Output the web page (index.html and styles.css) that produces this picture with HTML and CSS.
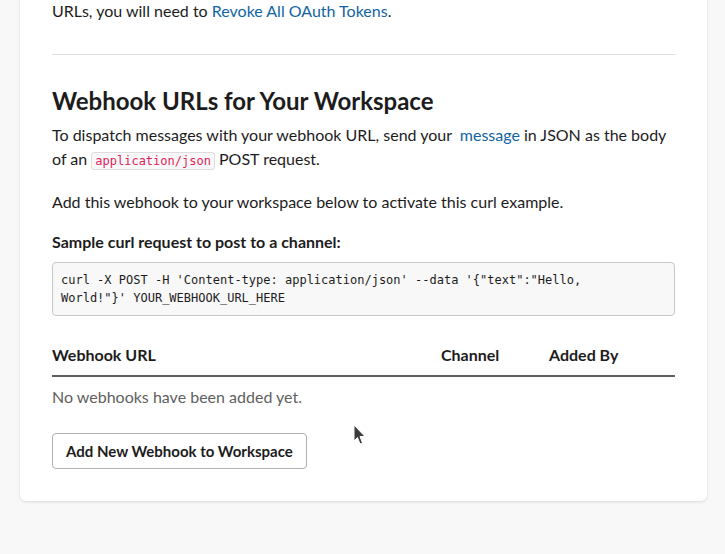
FILE: index.html
```html
<!DOCTYPE html>
<html>
<head>
<meta charset="utf-8">
<link rel="stylesheet" href="styles.css">
</head>
<body>
<div class="page">
  <section class="card">
    <p class="text">URLs, you will need to <a class="link" href="#">Revoke All OAuth Tokens</a>.</p>
    <hr class="divider">
    <h2 class="title">Webhook URLs for Your Workspace</h2>
    <p class="text">To dispatch messages with your webhook URL, send your <a class="link msg" href="#">message</a> in JSON as the body of an <code class="inline">application/json</code> POST request.</p>
    <p class="text gap-a">Add this webhook to your workspace below to activate this curl example.</p>
    <p class="text strong gap-b">Sample curl request to post to a channel:</p>
    <pre class="code">curl -X POST -H 'Content-type: application/json' --data '{"text":"Hello,
World!"}' YOUR_WEBHOOK_URL_HERE</pre>
    <div class="table-head">
      <span>Webhook URL</span>
      <span>Channel</span>
      <span>Added By</span>
    </div>
    <p class="text empty">No webhooks have been added yet.</p>
    <button class="btn">Add New Webhook to Workspace</button>
  </section>
</div>
<svg class="cursor" width="14" height="22" viewBox="0 0 14 22"><path d="M1 1 L1 17 L4.5 13.5 L7 20 L9.5 19 L7 12.5 L12 12.5 Z" fill="#3b3b3b" stroke="#fff" stroke-width="1"/></svg>
</body>
</html>
```

FILE: styles.css
```css
html, body {
  margin: 0;
  padding: 0;
  background: #f8f8f8;
  overflow: hidden;
}
body {
  font-family: Lato, "Noto Sans", sans-serif;
  color: #1d1c1d;
  font-size: 16px;
  line-height: 24px;
  position: relative;
  height: 554px;
}
.page {
  padding: 0 18px 0 20px;
  margin-top: -33px;
}
.card {
  background: #fff;
  border-radius: 6px;
  box-shadow: 0 1px 3px rgba(0,0,0,0.12);
  padding: 32px;
}
.text {
  margin: 0;
}
.gap-a {
  margin-top: 19px;
}
.gap-b {
  margin-top: 16px;
}
.link {
  color: #1264a3;
  text-decoration: none;
}
.msg {
  margin-left: 4px;
}
.divider {
  border: 0;
  border-top: 1px solid #dddddd;
  margin: 31px 0 30px;
}
.title {
  font-size: 24px;
  line-height: 32px;
  font-weight: 700;
  margin: 0 0 6px;
}
.inline {
  font-family: "DejaVu Sans Mono", "Liberation Mono", monospace;
  font-size: 12px;
  line-height: 18px;
  color: #e01e5a;
  background: #f8f8f8;
  border: 1px solid #dddddd;
  border-radius: 3px;
  padding: 1px 3px;
}
.strong {
  font-weight: 700;
}
.code {
  margin: 8px 0 0;
  font-family: "DejaVu Sans Mono", "Liberation Mono", monospace;
  font-size: 12px;
  line-height: 18px;
  background: #f8f8f8;
  border: 1px solid #c8c8c8;
  border-radius: 4px;
  padding: 8px;
  color: #1d1c1d;
  white-space: pre;
}
.table-head {
  display: grid;
  grid-template-columns: 389px 108px 1fr;
  font-weight: 700;
  margin-top: 27px;
  padding-bottom: 8px;
  border-bottom: 2px solid #616061;
}
.empty {
  color: #616061;
  margin-top: 8px;
}
.btn {
  margin-top: 24px;
  font-family: Lato, "Noto Sans", sans-serif;
  font-size: 15px;
  font-weight: 700;
  color: #1d1c1d;
  background: #fff;
  border: 1px solid #b0b0b0;
  border-radius: 4px;
  height: 36px;
  padding: 0 13px;
  display: block;
}
.cursor {
  position: absolute;
  left: 353px;
  top: 424px;
}
```
